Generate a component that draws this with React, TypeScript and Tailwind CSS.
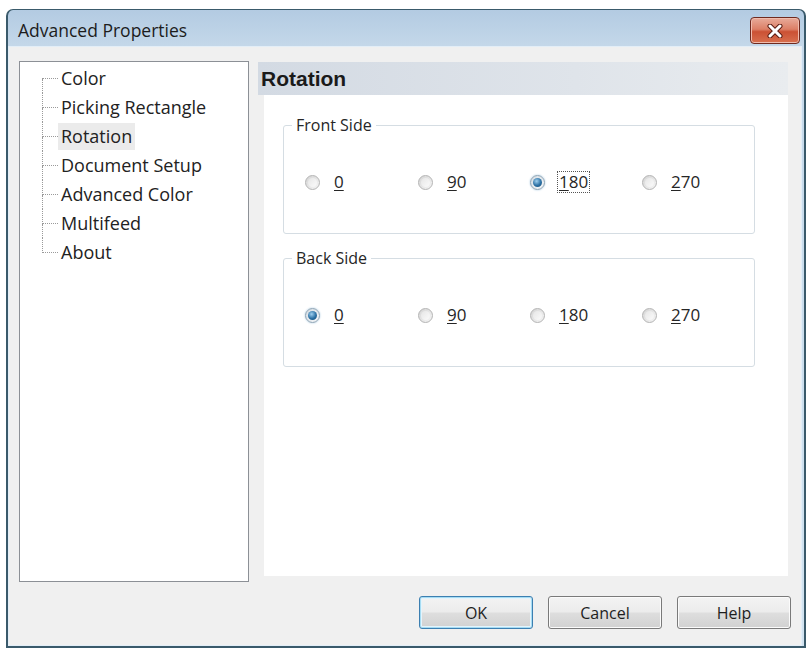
import clsx from "clsx";

const treeItems = ["Color", "Picking Rectangle", "Rotation", "Document Setup", "Advanced Color", "Multifeed", "About"];
const angles = ["0", "90", "180", "270"];

function Radio({ label, checked, focused }: { label: string; checked?: boolean; focused?: boolean }) {
  return (
    <div className="flex h-[20px] items-center gap-[12px]">
      <span
        className={clsx(
          "flex h-[15px] w-[15px] items-center justify-center rounded-full border",
          checked
            ? "border-[#8da3b4] bg-[linear-gradient(135deg,#d6dde3,#f5f7f9)] shadow-[0_0_2px_#9fc3dd]"
            : "border-[#b4b4b4] bg-[linear-gradient(135deg,#d4d4d4,#f6f6f6)]"
        )}
      >
        {checked ? (
          <span className="h-[9px] w-[9px] rounded-full bg-[radial-gradient(circle_at_40%_35%,#9fd0ef,#2a6fa3_55%,#154b74)]" />
        ) : (
          <span className="h-[9px] w-[9px] rounded-full bg-[linear-gradient(135deg,#e6e6e6,#fbfbfb)]" />
        )}
      </span>
      <span
        className={clsx(
          "text-[17px] leading-[20px] text-[#262626]",
          focused ? "border border-dotted border-[#555] px-[1px]" : "border border-transparent px-[1px]"
        )}
      >
        <u className="underline-offset-[2px]">{label[0]}</u>
        {label.slice(1)}
      </span>
    </div>
  );
}

function SideGroup({ title, value, focus }: { title: string; value: string; focus?: string }) {
  return (
    <fieldset className="h-[119px] w-[472px] rounded-[3px] border border-[#d5dde3] shadow-[inset_0_0_0_1px_#fff]">
      <legend className="ml-[8px] px-[4px] text-[16px] leading-[20px] text-[#262626]">{title}</legend>
      <div className="grid grid-cols-[113px_112px_112px_112px] pl-[21px] pt-[37px]">
        {angles.map((a) => (
          <Radio key={a} label={a} checked={a === value} focused={a === focus} />
        ))}
      </div>
    </fieldset>
  );
}

function Button({ children, primary }: { children: string; primary?: boolean }) {
  return (
    <button
      className={clsx(
        "h-[33px] w-[114px] rounded-[3px] border text-[16px] text-[#1e1e1e]",
        "bg-[linear-gradient(#f3f3f3,#ececec_48%,#dedede_52%,#d1d1d1)]",
        primary
          ? "border-[#3c7fb1] shadow-[inset_0_0_0_1px_#a6dcf3,inset_0_0_0_2px_#e4f4fc]"
          : "border-[#7a7a7a] shadow-[inset_0_0_0_1px_#fbfbfb]"
      )}
    >
      {children}
    </button>
  );
}

export default function App() {
  return (
    <div className="h-[648px] w-[809px] overflow-hidden bg-white pl-[6px] pt-[9px] font-['Open_Sans',sans-serif]">
      <div className="flex h-[639px] w-[800px] flex-col rounded-t-[7px] border-x-2 border-b-2 border-t border-[#3a5a6b] bg-[linear-gradient(#b3cbe2,#c6d9ea_40px,#d2e3f0)] pb-[1px] pl-[1px] pr-[3px]">
        {/* title bar */}
        <div className="flex h-[37px] shrink-0 items-start">
          <span className="pl-[9px] pt-[9px] text-[17.5px] leading-[23px] text-[#1c1c1c]">Advanced Properties</span>
          <div className="ml-auto mr-[1px] mt-[7px] flex h-[27px] w-[50px] items-center justify-center rounded-[4px] border border-[#6f2a1f] bg-[linear-gradient(#e8ab9a,#dc7f66_45%,#cb5134_55%,#d8704f)] shadow-[inset_0_0_0_1px_#f0bcae]">
            <svg width="18" height="14" viewBox="0 0 18 14">
              <path d="M4 2 L14 12 M14 2 L4 12" stroke="#5a1c12" strokeWidth="5" strokeLinecap="round" />
              <path d="M4 2 L14 12 M14 2 L4 12" stroke="#fff" strokeWidth="3" strokeLinecap="round" />
            </svg>
          </div>
        </div>

        {/* client area */}
        <div className="flex flex-1 flex-col bg-[#f0f0f0] pl-[10px] pr-[10px] pt-[14px] shadow-[0_0_0_1px_#e3eef7]">
          <div className="flex items-start gap-[9px]">
            <div className="h-[521px] w-[230px] border border-[#8c9096] bg-white pl-[22px] pt-[2px] text-[18px] text-[#222]">
              {treeItems.map((item, i) => (
                <div key={item} className="flex h-[29px]">
                  <div className="flex w-[16px] flex-col">
                    <div className={clsx("h-[15px] border-b border-dotted border-[#9a9a9a]", i > 0 && "border-l")} />
                    <div className={clsx("flex-1 border-dotted border-[#9a9a9a]", i < treeItems.length - 1 && "border-l")} />
                  </div>
                  <div className="flex items-center">
                    <span className={clsx("px-[3px] leading-[27px]", item === "Rotation" && "bg-[#ebebeb]")}>{item}</span>
                  </div>
                </div>
              ))}
            </div>

            <div className="mt-[1px] flex w-[530px] flex-col">
              <div className="flex h-[33px] items-center bg-[linear-gradient(90deg,#d3dae3,#dfe4ea_60%,#e9ecef)] pl-[3px]">
                <span className="font-['Liberation_Sans',Arial,sans-serif] text-[21px] font-bold leading-none text-[#1a1a1a]">
                  Rotation
                </span>
              </div>
              <div className="ml-[6px] flex h-[481px] flex-col bg-white pl-[19px] pt-[20px]">
                <SideGroup title="Front Side" value="180" focus="180" />
                <div className="mt-[14px]">
                  <SideGroup title="Back Side" value="0" />
                </div>
              </div>
            </div>
          </div>

          <div className="mt-[14px] flex justify-end gap-[15px]">
            <Button primary>OK</Button>
            <Button>Cancel</Button>
            <Button>Help</Button>
          </div>
        </div>
      </div>
    </div>
  );
}
